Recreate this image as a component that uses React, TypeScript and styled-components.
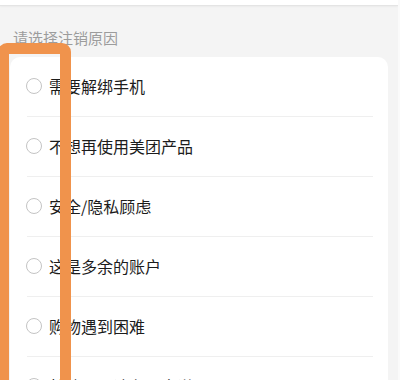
import React from 'react'
import styled, { createGlobalStyle } from 'styled-components'

const GlobalStyle = createGlobalStyle`
  html, body {
    margin: 0;
    padding: 0;
    background: #f4f4f4;
    font-family: "Noto Sans CJK SC", "Noto Sans", sans-serif;
  }
`

const Page = styled.div`
  position: relative;
  width: 400px;
  height: 380px;
  overflow: hidden;
  background: #f4f4f4;
  border-right: 2px solid #fafafa;
  box-sizing: border-box;
`

const TopBar = styled.div`
  height: 5px;
  background: #ffffff;
  border-bottom: 1px solid #e4e4e4;
  box-shadow: 0 1px 2px rgba(0, 0, 0, 0.04);
`

const Body = styled.div`
  padding: 0 10px;
`

const SectionLabel = styled.div`
  padding: 21px 0 9px 3px;
  font-size: 15px;
  line-height: 21px;
  color: #9c9c9c;
`

const Card = styled.div`
  background: #ffffff;
  border-radius: 10px;
  overflow: hidden;
`

const Row = styled.label`
  display: flex;
  align-items: center;
  gap: 7px;
  height: 60px;
  padding: 0 0 2px 16px;
  box-sizing: border-box;
  position: relative;

  &::after {
    content: '';
    position: absolute;
    left: 17px;
    right: 15px;
    bottom: 0;
    height: 1px;
    background: #efefef;
  }
`

const Radio = styled.span`
  width: 16px;
  height: 16px;
  border-radius: 50%;
  border: 1px solid #c4c4c4;
  box-sizing: border-box;
  flex-shrink: 0;
`

const RowText = styled.span`
  font-size: 16px;
  color: #1c1c1c;
  line-height: 22px;
`

const Highlight = styled.div`
  position: absolute;
  left: -2px;
  top: 43px;
  width: 73px;
  height: 400px;
  border: 11px solid #f0934c;
  border-radius: 9px;
  box-sizing: border-box;
  pointer-events: none;
`

const reasons = [
  '需要解绑手机',
  '不想再使用美团产品',
  '安全/隐私顾虑',
  '这是多余的账户',
  '购物遇到困难',
  '其他原因请在下方说明',
]

export default function App() {
  return (
    <Page>
      <GlobalStyle />
      <TopBar />
      <Body>
        <SectionLabel>请选择注销原因</SectionLabel>
        <Card>
          {reasons.map((r) => (
            <Row key={r}>
              <Radio />
              <RowText>{r}</RowText>
            </Row>
          ))}
        </Card>
      </Body>
      <Highlight />
    </Page>
  )
}
